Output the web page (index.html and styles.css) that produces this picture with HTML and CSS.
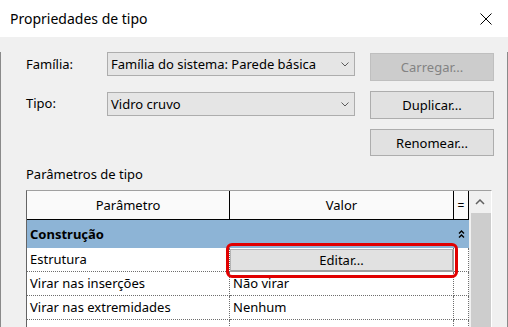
FILE: index.html
```html
<!DOCTYPE html>
<html lang="pt">
<head>
    <meta charset="UTF-8">
    <title>Propriedades de tipo</title>
    <link rel="stylesheet" href="styles.css">
</head>
<body>
    <div class="window">
        <div class="titlebar">
            <span class="title">Propriedades de tipo</span>
            <svg class="close" width="12" height="12" viewBox="0 0 12 12">
                <path d="M0.5 0.5 L11.5 11.5 M11.5 0.5 L0.5 11.5" stroke="#000" stroke-width="1" fill="none"/>
            </svg>
        </div>

        <div class="dialog">
            <div class="field-row first">
                <span class="field-label">Família:</span>
                <div class="combo">
                    <span>Família do sistema: Parede básica</span>
                    <svg class="chevron" width="8" height="5" viewBox="0 0 8 5"><path d="M0.5 0.5 L4 4 L7.5 0.5" stroke="#5a5a5a" fill="none"/></svg>
                </div>
                <button class="btn" disabled>Carregar...</button>
            </div>

            <div class="field-row">
                <span class="field-label">Tipo:</span>
                <div class="combo">
                    <span>Vidro cruvo</span>
                    <svg class="chevron" width="8" height="5" viewBox="0 0 8 5"><path d="M0.5 0.5 L4 4 L7.5 0.5" stroke="#5a5a5a" fill="none"/></svg>
                </div>
                <button class="btn">Duplicar...</button>
            </div>

            <div class="field-row">
                <button class="btn rename">Renomear...</button>
            </div>

            <div class="section-label">Parâmetros de tipo</div>

            <div class="grid-frame">
                <div class="grid">
                    <div class="head-cell">Parâmetro</div>
                    <div class="head-cell">Valor</div>
                    <div class="head-cell eq">=</div>

                    <div class="group-row">
                        <span>Construção</span>
                        <svg class="collapse" width="15" height="9" viewBox="0 0 15 9">
                            <path d="M5 3.5 L7.5 1 L10 3.5 M5 7.5 L7.5 5 L10 7.5" stroke="#000" stroke-width="1.4" fill="none"/>
                        </svg>
                    </div>

                    <div class="cell">Estrutura</div>
                    <div class="cell value"><button class="edit-btn">Editar...</button></div>
                    <div class="cell"></div>

                    <div class="cell">Virar nas inserções</div>
                    <div class="cell value">Não virar</div>
                    <div class="cell"></div>

                    <div class="cell">Virar nas extremidades</div>
                    <div class="cell value">Nenhum</div>
                    <div class="cell"></div>

                    <div class="cell">Largura</div>
                    <div class="cell value">0.2000</div>
                    <div class="cell"></div>
                </div>

                <div class="scrollbar">
                    <div class="scroll-up">
                        <svg width="10" height="6" viewBox="0 0 10 6"><path d="M1 5 L5 1 L9 5" stroke="#606060" stroke-width="1.5" fill="none"/></svg>
                    </div>
                    <div class="thumb"></div>
                </div>

                <div class="highlight"></div>
            </div>
        </div>
    </div>
</body>
</html>
```

FILE: styles.css
```css
body {
    margin: 0;
    background: #f0f0f0;
}
.window {
    width: 508px;
    height: 327px;
    overflow: hidden;
    font-family: "Noto Sans", sans-serif;
    font-size: 13px;
    color: #000;
}
.titlebar {
    height: 37px;
    background: #fff;
    display: flex;
    align-items: center;
    justify-content: space-between;
    padding: 0 16px 0 10px;
}
.title {
    font-size: 14px;
}
.dialog {
    height: 290px;
    box-sizing: border-box;
    background: #f0f0f0;
    border-left: 1px solid #8a8a8a;
    border-right: 1px solid #8a8a8a;
    padding-left: 25px;
}
.field-row {
    display: flex;
    align-items: flex-start;
    margin-top: 10px;
}
.field-row.first {
    margin-top: 15px;
}
.field-row + .field-row .combo {
    margin-top: 1px;
}
.field-row.first .btn {
    margin-top: 1px;
}
.field-label {
    width: 81px;
    line-height: 24px;
}
.combo {
    width: 248px;
    height: 24px;
    box-sizing: border-box;
    border: 1px solid #adadad;
    background: #e5e5e5;
    display: flex;
    align-items: center;
    justify-content: space-between;
    padding: 0 5px 0 3px;
}
.chevron {
    display: block;
}
.btn {
    width: 124px;
    height: 28px;
    margin-left: 15px;
    border: 1px solid #adadad;
    background: #e1e1e1;
    font-family: inherit;
    font-size: 13px;
    color: #000;
    padding: 0;
}
.btn:disabled {
    background: #cccccc;
    border-color: #bfbfbf;
    color: #838383;
}
.btn.rename {
    margin-left: 344px;
    height: 27px;
}
.section-label {
    margin-top: 9px;
    line-height: 18px;
}
.grid-frame {
    position: relative;
    margin-top: 7px;
    width: 466px;
    height: 140px;
    box-sizing: border-box;
    display: flex;
    border-top: 1px solid #a0a0a0;
    border-left: 1px solid #646464;
    border-right: 1px solid #fff;
}
.grid {
    width: 442px;
    display: grid;
    grid-template-columns: 203px 224px 15px;
    grid-auto-rows: 24px;
    grid-template-rows: 29px 28px;
    background: #fff;
}
.head-cell {
    box-sizing: border-box;
    background: #fafafa;
    border-right: 1px solid #000;
    border-bottom: 1px solid #000;
    display: flex;
    align-items: center;
    justify-content: center;
}
.head-cell.eq {
    font-size: 12px;
}
.group-row {
    grid-column: 1 / -1;
    background: #8db4d6;
    font-weight: bold;
    display: flex;
    align-items: center;
    justify-content: space-between;
    padding-left: 3px;
}
.collapse {
    display: block;
    margin-top: 1px;
}
.cell {
    box-sizing: border-box;
    border-right: 1px dotted #6e6e6e;
    border-bottom: 1px dotted #6e6e6e;
    padding-left: 3px;
    line-height: 23px;
    white-space: nowrap;
}
.cell.value {
    position: relative;
}
.edit-btn {
    position: absolute;
    left: 0;
    top: 1px;
    width: 224px;
    height: 23px;
    box-sizing: border-box;
    border: 1px solid #b4b4b4;
    border-right: 2px solid #a0a0a0;
    border-bottom: 2px solid #a0a0a0;
    background: #e1e1e1;
    font-family: inherit;
    font-size: 13px;
    color: #000;
    padding: 0;
}
.scrollbar {
    width: 22px;
    background: #f0f0f0;
    display: flex;
    flex-direction: column;
}
.scroll-up {
    height: 22px;
    display: flex;
    align-items: center;
    justify-content: center;
}
.scroll-up svg {
    display: block;
}
.thumb {
    flex: 1;
    margin-left: 2px;
    background: #cdcdcd;
}
.highlight {
    position: absolute;
    left: 199px;
    top: 52px;
    width: 232px;
    height: 35px;
    box-sizing: border-box;
    border: 3px solid #e10000;
    border-radius: 6px;
    pointer-events: none;
}
```
